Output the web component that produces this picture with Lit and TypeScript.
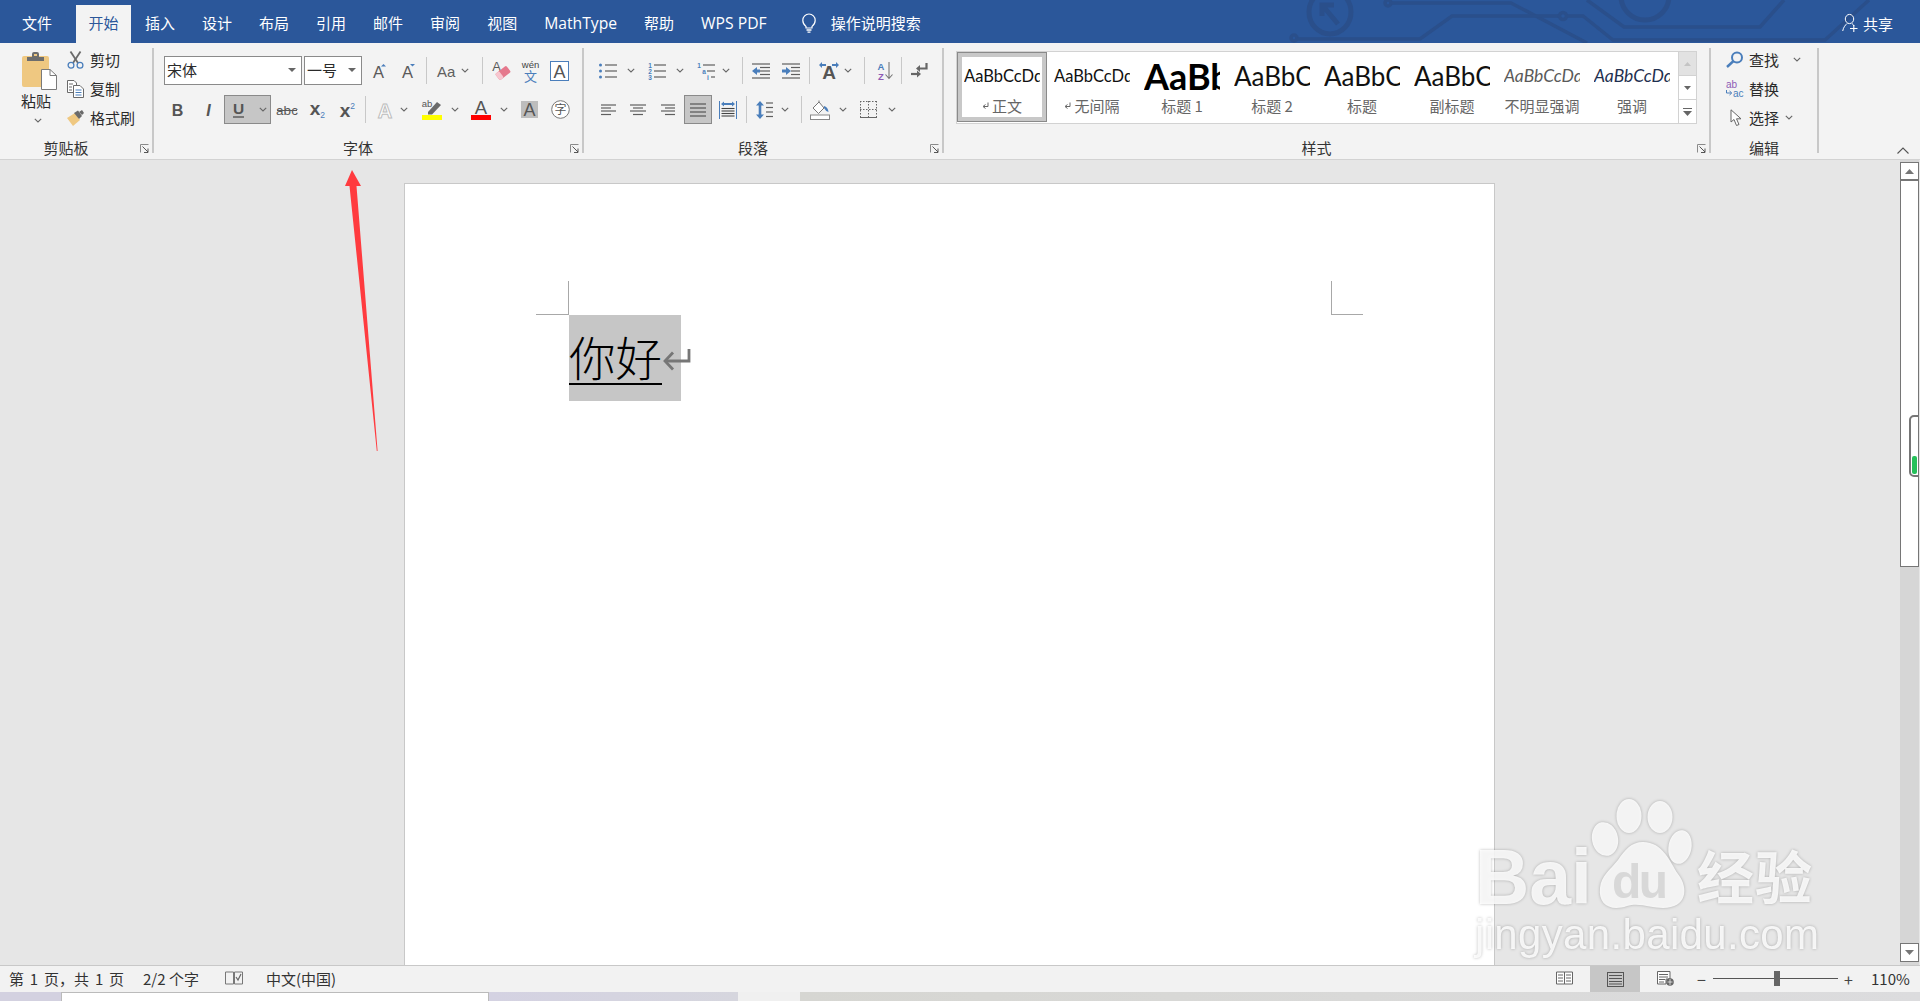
import { LitElement, html, css, svg, TemplateResult } from "lit";
import { customElement } from "lit/decorators.js";

type Item = [number, number, unknown];
const G = "#5f5f5f";
const B = "#4a7ebb";

const ic = (w: number, h: number, body: unknown) =>
  html`<svg class="ic" width=${w} height=${h} viewBox="0 0 ${w} ${h}">${body}</svg>`;

const chev = ic(8, 5, svg`<polyline points="0.8,0.8 4,4 7.2,0.8" fill="none" stroke="#666" stroke-width="1.1"/>`);
const caret = ic(8, 4, svg`<polygon points="0,0 8,0 4,4" fill="#666"/>`);
const sep = html`<div class="vsep"></div>`;
const lines = (rows: [number, number, number][], color = G, sw = 1.2) =>
  rows.map(([x1, x2, y]) => svg`<line x1=${x1} x2=${x2} y1=${y} y2=${y} stroke=${color} stroke-width=${sw}/>`);

const row = (x0: number, items: Item[], cls = "row") => {
  let end = x0;
  return html`<div class=${cls}>
    ${items.map(([x, w, c]) => {
      const m = x - end;
      end = x + w;
      return html`<div class="cell" style="margin-left:${m}px;width:${w}px">${c}</div>`;
    })}
  </div>`;
};

const launcher = ic(9, 9, svg`<path d="M0.5 8.5V0.5H8.5" fill="none" stroke="#8a8a8a"/><path d="M2.5 2.5L8 8M8 4.5V8.5H4" fill="none" stroke="#555"/>`);

const pasteIc = ic(36, 38, svg`
  <rect x="1" y="4" width="27" height="31" rx="2" fill="#efc881"/>
  <path d="M6 9V5H11V2Q11 0 13 0H16Q18 0 18 2V5H23V9Z" fill="#6d6d6d"/>
  <rect x="13" y="2" width="3" height="2" fill="#efc881"/>
  <path d="M20.5 17.5H29L35.5 23.5V37.5H20.5Z" fill="#fff" stroke="#7a7a7a"/>
  <path d="M29 17.5V23.5H35.5" fill="none" stroke="#7a7a7a"/>`);
const scissorsIc = ic(17, 18, svg`
  <line x1="3.5" y1="0.5" x2="11" y2="12" stroke="#6a6a6a" stroke-width="1.8"/>
  <line x1="13.5" y1="0.5" x2="6" y2="12" stroke="#6a6a6a" stroke-width="1.8"/>
  <circle cx="4" cy="14.2" r="2.9" fill="none" stroke=${B} stroke-width="1.3"/>
  <circle cx="13" cy="14.2" r="2.9" fill="none" stroke=${B} stroke-width="1.3"/>`);
const copyIc = ic(17, 18, svg`
  <path d="M0.5 0.5H7L9.5 3V12.5H0.5Z" fill="#fff" stroke="#6a6a6a"/>
  <path d="M6.5 5.5H13L16.5 9V17.5H6.5Z" fill="#fff" stroke="#6a6a6a"/>
  ${lines([[2, 6, 4], [2, 5, 7], [2, 5, 10]], "#6a6a6a", 1)}
  ${lines([[8.5, 14.5, 10], [8.5, 14.5, 12.5], [8.5, 14.5, 15]], B, 1)}`);
const painterIc = ic(18, 16, svg`
  <polygon points="0,8 8,3 13,10 6,16" fill="#efc881"/>
  <polygon points="7,3 11,0.5 15,6 12,9" fill="#6a6a6a"/>
  <polygon points="12,2 15,0 17,3 15,5" fill="#6a6a6a"/>`);

const glyph = (x: number, y: number, t: string, size: number, color = G, weight = "400", style = "normal") =>
  svg`<text x=${x} y=${y} font-size=${size} fill=${color} font-weight=${weight} font-style=${style} class="lat" text-anchor="middle">${t}</text>`;

const growIc = ic(13, 14, svg`${glyph(5.5, 14, "A", 16.5, "#5a5a5a")}<polygon points="8,2.5 13,2.5 10.5,0" fill=${B}/>`);
const shrinkIc = ic(13, 14, svg`${glyph(5.5, 14, "A", 16.5, "#5a5a5a")}<polygon points="8,0 13,0 10.5,2.5" fill=${B}/>`);
const aaIc = ic(18, 14, svg`<text x="0" y="13" font-size="15" fill=${G} class="lat">Aa</text>`);
const eraserIc = ic(19, 21, svg`
  ${glyph(4.5, 11, "A", 13, "#5a5a5a")}
  <g transform="rotate(-38 11 13)"><rect x="4" y="9" width="14" height="8" rx="1.5" fill="#e5788c"/><rect x="4" y="9" width="5" height="8" rx="1.5" fill="#f7c6cf"/></g>`);
const wenIc = ic(17, 22, svg`
  ${glyph(8.5, 8, "wén", 9.5, "#444")}
  <text x="8.5" y="21" font-size="13" fill=${B} class="cjk" text-anchor="middle">文</text>`);
const boxAIc = ic(19, 20, svg`<rect x="0.5" y="0.5" width="18" height="19" fill="#fff" stroke=${B}/>${glyph(9.5, 16.5, "A", 18, "#555")}`);

const boldIc = ic(11, 15, svg`${glyph(5.5, 13.5, "B", 16, "#555", "700")}`);
const italIc = ic(11, 15, svg`${glyph(5.5, 13.5, "I", 16, "#555", "700", "italic")}`);
const underBtn = html`<div class="toggled ubtn">${ic(11, 17, svg`${glyph(5.5, 12.5, "U", 15.5, "#555", "700")}<line x1="0" x2="11" y1="16" y2="16" stroke="#555" stroke-width="1.4"/>`)}${chev}</div>`;
const abcIc = ic(20, 12, svg`${glyph(10, 10.5, "abc", 13.5, "#5a5a5a")}<line x1="0" x2="20" y1="6.5" y2="6.5" stroke="#5a5a5a" stroke-width="1"/>`);
const subIc = ic(15, 16, svg`${glyph(5, 12.5, "x", 19, "#555", "700")}${glyph(12.5, 15.5, "2", 8.5, B)}`);
const supIc = ic(15, 16, svg`${glyph(5, 15, "x", 19, "#555", "700")}${glyph(12.5, 6.5, "2", 8.5, B)}`);
const effectIc = ic(16, 18, svg`<text x="8" y="16.5" font-size="20" text-anchor="middle" class="lat" font-weight="700" fill="#fff" stroke="#bdbdbd" stroke-width="1">A</text>`);
const highlightIc = ic(20, 21, svg`
  ${glyph(5, 7.5, "ab", 9.5, "#555")}
  <polygon points="6,13 15,3 19,6 10,15.5 6,15.5" fill="#6a6a6a"/>
  <rect x="0" y="16" width="20" height="5" fill="#ffff00"/>`);
const redAIc = ic(20, 21, svg`${glyph(10, 15, "A", 18.5, "#555")}<rect x="0" y="16" width="20" height="5" fill="#ff0000"/>`);
const shadeAIc = ic(17, 17, svg`<rect width="17" height="17" fill="#bdbdbd"/>${glyph(8.5, 15, "A", 18, "#555")}`);
const circleIc = ic(19, 19, svg`<circle cx="9.5" cy="9.5" r="8.8" fill="#fff" stroke="#777"/><text x="9.5" y="14" font-size="12" fill="#555" class="cjk" text-anchor="middle">字</text>`);

const dots = (x: number, ys: number[], color = B) => ys.map((y) => svg`<circle cx=${x} cy=${y} r="1.5" fill=${color}/>`);
const bulletsIc = ic(18, 16, svg`${dots(1.5, [2, 8, 14])}${lines([[6, 18, 2], [6, 18, 8], [6, 18, 14]])}`);
const small = (x: number, y: number, t: string, c = B) => glyph(x, y, t, 6.5, c, "700");
const numsIc = ic(18, 16, svg`${small(2, 5, "1")}${small(2, 11, "2")}${small(2, 16.5, "3")}${lines([[6, 18, 2], [6, 18, 8], [6, 18, 14]])}`);
const multiIc = ic(18, 16, svg`${small(2, 5, "1")}${small(7, 11, "a", "#4a7ebb")}${small(11, 16.5, "i")}${lines([[6, 18, 2], [10, 18, 8], [14, 18, 14]])}`);
const indentDec = ic(18, 16, svg`${lines([[0, 18, 1], [8, 18, 4.5], [8, 18, 8], [8, 18, 11.5], [0, 18, 15]])}<path d="M0 8L5 4V6.5H8V9.5H5V12Z" fill=${B}/>`);
const indentInc = ic(18, 16, svg`${lines([[0, 18, 1], [9, 18, 4.5], [9, 18, 8], [9, 18, 11.5], [0, 18, 15]])}<path d="M9 8L4 4V6.5H0V9.5H4V12Z" fill=${B}/>`);
const dirIc = ic(20, 17, svg`${glyph(10, 17, "A", 19, "#555", "700")}<path d="M0 3L3 0V2H7V4H3V6ZM20 3L17 0V2H13V4H17V6Z" fill=${B}/>`);
const sortIc = ic(17, 18, svg`
  ${glyph(5, 8, "A", 9.5, B, "700")}${glyph(5, 17.5, "Z", 9.5, "#8e5bb5", "700")}
  <path d="M13 0V16M9.5 12.5L13 16.5L16.5 12.5" fill="none" stroke="#777" stroke-width="1.1"/>`);
const enterIc = ic(17, 15, svg`
  <path d="M15.5 0V5.5H7" fill="none" stroke="#666" stroke-width="2.2"/><path d="M9 2L5 5.5L9 9Z" fill="#666"/>
  <path d="M0 11H7" fill="none" stroke="#666" stroke-width="2.2"/><path d="M6 7.5L10 11L6 14.5Z" fill="#666"/>`);
const alignL = ic(15, 12, svg`${lines([[0, 15, 1], [0, 10, 4], [0, 15, 7], [0, 10, 10.5]])}`);
const alignC = ic(16, 12, svg`${lines([[0, 16, 1], [3, 13, 4], [0, 16, 7], [3, 13, 10.5]])}`);
const alignR = ic(14, 12, svg`${lines([[0, 14, 1], [4, 14, 4], [0, 14, 7], [4, 14, 10.5]])}`);
const justBtn = html`<div class="toggled jbtn">${ic(16, 14, svg`${lines([[0, 16, 1], [0, 16, 5], [0, 16, 9], [0, 16, 13]], "#555")}`)}</div>`;
const distIc = ic(18, 18, svg`
  <line x1="0.5" x2="0.5" y1="0" y2="18" stroke=${B}/><line x1="17.5" x2="17.5" y1="0" y2="18" stroke=${B}/>
  <path d="M2 3L5 0.5V2H13V0.5L16 3L13 5.5V4H5V5.5Z" fill=${B}/>
  ${lines([[2.5, 15.5, 7.5], [2.5, 15.5, 10], [2.5, 15.5, 12.5], [2.5, 15.5, 15]], "#444", 1.1)}`);
const spacingIc = ic(17, 18, svg`
  <path d="M4 0L8 4.5H5.3V13.5H8L4 18L0 13.5H2.7V4.5H0Z" fill=${B}/>
  ${lines([[10, 17, 2], [10, 17, 6.5], [10, 17, 11], [10, 17, 15.5]])}`);
const fillIc = ic(20, 20, svg`
  <path d="M3 8L9 2L14 8L8.5 13.5Z" fill="#fff" stroke="#777"/>
  <path d="M9 2V0.5" stroke="#777"/>
  <path d="M14 6Q18 7 18.5 12Q15.5 11 14 8Z" fill=${B}/>
  <rect x="0.5" y="15" width="19" height="4.5" fill="#fff" stroke="#888"/>`);
const borderIc = ic(17, 17, svg`
  <g stroke="#666" stroke-dasharray="1.5 1.5" fill="none"><path d="M0.5 0V16M8.5 0V16M16.5 0V16M0 0.5H17M0 8.5H17"/></g>
  <line x1="0" x2="17" y1="16.5" y2="16.5" stroke="#666"/>`);
const findIc = ic(18, 17, svg`<circle cx="11" cy="6.5" r="5" fill="none" stroke=${B} stroke-width="2"/><line x1="7.5" y1="10" x2="1" y2="16" stroke=${B} stroke-width="2.4"/>`);
const replaceIc = ic(20, 17, svg`
  <text x="1" y="8" font-size="10" fill="#8e5bb5" class="lat">ab</text>
  <text x="8" y="16.5" font-size="10" fill=${B} class="lat">ac</text>
  <path d="M1.5 10V13H6M4.5 11L6.8 13L4.5 15" fill="none" stroke=${B}/>`);
const selectIc = ic(12, 17, svg`<path d="M1 0.8V13L4 10.5L6.5 16.5L9 15.5L6.5 9.8H11Z" fill="#fff" stroke="#666"/>`);

const cjkText = (t: string) => html`<span class="txt">${t}</span>`;

const fontRow1 = row(154, [
  [164, 138, html`<div class="combo"><span>宋体</span>${caret}</div>`],
  [304, 58, html`<div class="combo"><span>一号</span>${caret}</div>`],
  [373, 13, growIc], [402, 13, shrinkIc], [426, 1, sep],
  [437, 18, aaIc], [461, 8, chev], [482, 1, sep],
  [492, 19, eraserIc], [522, 17, wenIc], [550, 19, boxAIc],
]);
const fontRow2 = row(154, [
  [172, 11, boldIc], [203, 11, italIc], [224, 47, underBtn], [277, 20, abcIc],
  [310, 15, subIc], [340, 15, supIc], [365, 1, sep],
  [377, 16, effectIc], [400, 8, chev], [422, 20, highlightIc], [451, 8, chev],
  [471, 20, redAIc], [500, 8, chev], [521, 17, shadeAIc], [551, 19, circleIc],
]);
const paraRow1 = row(584, [
  [599, 18, bulletsIc], [627, 8, chev], [648, 18, numsIc], [676, 8, chev],
  [697, 18, multiIc], [722, 8, chev], [742, 1, sep],
  [752, 18, indentDec], [782, 18, indentInc], [809, 1, sep],
  [819, 20, dirIc], [844, 8, chev], [864, 1, sep], [876, 17, sortIc], [901, 1, sep], [911, 17, enterIc],
]);
const paraRow2 = row(584, [
  [601, 15, alignL], [630, 16, alignC], [661, 14, alignR], [684, 28, justBtn], [719, 18, distIc],
  [746, 1, sep], [756, 17, spacingIc], [781, 8, chev], [801, 1, sep],
  [810, 20, fillIc], [839, 8, chev], [860, 17, borderIc], [888, 8, chev],
]);

const styleItems = [
  { s: "AaBbCcDd", l: "正文", c: "normal", mark: true, sel: true },
  { s: "AaBbCcDd", l: "无间隔", c: "normal", mark: true },
  { s: "AaBb", l: "标题 1", c: "h1" },
  { s: "AaBbC", l: "标题 2", c: "h2" },
  { s: "AaBbC", l: "标题", c: "h2" },
  { s: "AaBbC", l: "副标题", c: "h2" },
  { s: "AaBbCcDd", l: "不明显强调", c: "em1" },
  { s: "AaBbCcDd", l: "强调", c: "em2" },
];
const markIc = ic(7, 8, svg`<path d="M6 0.5V4.5H1.5M3.5 2.5L1 4.5L3.5 6.5" fill="none" stroke="#666"/>`);

const readIc = ic(17, 15, svg`
  <path d="M0.5 1H8.5V13H0.5ZM8.5 1H16.5V13H8.5Z" fill="#fff" stroke="#666"/>
  ${lines([[2, 7, 4], [2, 7, 7], [2, 7, 10], [10, 15, 4], [10, 15, 7], [10, 15, 10]], "#666", 1)}`);
const printIc = ic(17, 15, svg`
  <rect x="0.5" y="0.5" width="16" height="14" fill="none" stroke="#555"/>
  ${lines([[2, 15, 3.5], [2, 15, 6.5], [2, 15, 9.5], [2, 15, 12]], "#555", 1)}`);
const webIc = ic(17, 15, svg`
  <path d="M0.5 0.5H13V8H9V13H0.5Z" fill="#fff" stroke="#666"/>
  ${lines([[2, 11, 3.5], [2, 11, 6], [2, 8, 8.5], [2, 7, 11]], "#666", 1)}
  <circle cx="13" cy="11" r="3.8" fill="#666"/><path d="M10.5 11H15.5M13 8V14" stroke="#fff" stroke-width=".7"/>`);
const proofIc = ic(18, 15, svg`
  <path d="M0.5 1H8.5V13H0.5ZM9.5 1H17.5V13H9.5Z" fill="none" stroke="#777"/>
  <path d="M11 6L13 9L16 3" fill="none" stroke="#666" stroke-width="1.2"/>`);
const slider = html`<div class="slider"><div class="knob"></div></div>`;

@customElement("app-root")
export class AppRoot extends LitElement {
  static styles = css`
    :host { display: block; width: 1920px; height: 1001px; overflow: hidden; font-family: "Noto Sans CJK SC", "Liberation Sans", sans-serif; font-size: 15px; color: #2a2a2a; }
    .app { position: relative; width: 1920px; height: 1001px; display: flex; flex-direction: column; overflow: hidden; background: #e6e6e6; }
    .lat { font-family: "Liberation Sans", sans-serif; }
    .cjk { font-family: "Noto Sans CJK SC", sans-serif; }
    .ic { display: block; flex: none; overflow: visible; }

    .titlebar { position: relative; height: 43px; flex: none; background: #2b579a; display: flex; align-items: flex-end; color: #fff; overflow: hidden; }
    .circuit { position: absolute; left: 0; top: 0; }
    .tabs { position: relative; display: flex; height: 38px; padding-left: 22px; width: 100%; box-sizing: border-box; }
    .tab { height: 38px; line-height: 36px; padding: 0 13px; white-space: nowrap; margin-right: 1px; font-family: "Noto Sans CJK SC", sans-serif; }
    .tab.file { padding: 0; margin-right: 24px; }
    .tab.active { background: #f3f3f3; color: #2b579a; padding: 0 12.5px; margin-right: 1px; }
    .tab.latin { font-family: "Open Sans", "Noto Sans", sans-serif; font-size: 15.7px; }
    .search { display: flex; align-items: center; height: 35px; gap: 15px; margin-left: 21px; }
    .share { display: flex; align-items: center; height: 36px; gap: 5px; margin-left: auto; margin-right: 27px; }

    .ribbon { height: 117px; flex: none; background: #f3f3f3; border-bottom: 1px solid #d2d2d2; box-sizing: border-box; padding-top: 5px; display: flex; }
    .group { height: 105px; border-right: 2px solid #c8c8c8; box-sizing: border-box; display: flex; flex-direction: column; flex: none; }
    .g1 { width: 154px; } .g2 { width: 430px; } .g3 { width: 360px; } .g4 { width: 767px; } .g5 { width: 108px; }
    .body { height: 92px; flex: none; }
    .body.tall { height: 95px; }
    .rows { box-sizing: border-box; padding-top: 8px; display: flex; flex-direction: column; gap: 10px; }
    .row { display: flex; align-items: center; height: 29px; flex: none; }
    .cell { flex: none; display: flex; align-items: center; justify-content: center; white-space: nowrap; }
    .foot { display: flex; height: 16px; flex: none; align-items: center; padding-right: 3px; }
    .foot .name { flex: 1; text-align: center; line-height: 20px; padding-right: 8px; color: #333; }
    .foot.plain .name { padding: 0 0 0 3px; }
    .vsep { width: 1px; height: 27px; background: #c8c8c8; }
    .combo { width: 100%; height: 29px; box-sizing: border-box; border: 1px solid #8a8a8a; background: #fff; display: flex; align-items: center; justify-content: space-between; padding: 0 5px 2px 2px; }
    .toggled { height: 29px; box-sizing: border-box; background: #c6c6c6; border: 1px solid #8a8a8a; display: flex; align-items: center; width: 100%; }
    .ubtn { padding-left: 8px; gap: 15px; }
    .jbtn { justify-content: center; }
    .txt { display: block; line-height: 20px; color: #2a2a2a; }

    .clip { display: flex; }
    .paste { margin-left: 21px; width: 36px; padding-top: 4px; display: flex; flex-direction: column; align-items: flex-start; }
    .paste .txt { margin-top: 1px; }
    .paste .down { margin: 7px 0 0 13px; }
    .cliprows { margin-top: -3px; }

    .gallery { margin: 3px 0 0 12px; width: 741px; height: 73px; box-sizing: border-box; border: 1px solid #d2d2d2; background: #fff; display: flex; position: relative; }
    .sitem { width: 90px; flex: none; height: 70px; margin-top: 0; display: flex; flex-direction: column; align-items: center; box-sizing: border-box; }
    .sitem.sel { box-shadow: inset 0 0 0 1px #8a8a8a, inset 0 0 0 5px #c8c8c8; }
    .sample { width: 76px; height: 45px; overflow: hidden; white-space: nowrap; line-height: 48px; color: #111; font-family: Lato, "Liberation Sans", sans-serif; font-size: 16.5px; flex: none; }
    .sample.h1 { font-size: 36px; font-weight: 700; color: #000; }
    .sample.h2 { font-size: 26px; }
    .sample.em1 { font-style: italic; color: #5a5a5a; font-size: 17.5px; }
    .sample.em2 { font-style: italic; color: #1f3050; font-size: 17.5px; }
    .slabel { color: #666; display: flex; align-items: center; gap: 3px; line-height: 18px; }
    .scroller { margin-left: auto; width: 18px; flex: none; display: flex; flex-direction: column; border-left: 1px solid #d2d2d2; box-sizing: border-box; }
    .sbtn { flex: 1; display: flex; align-items: center; justify-content: center; border-bottom: 1px solid #d2d2d2; }
    .sbtn.dis { background: #e2e2e2; }
    .sbtn:last-child { border-bottom: none; }

    .work { flex: 1; min-height: 0; display: flex; background: #e6e6e6; }
    .canvas { flex: 1; min-width: 0; padding: 23px 0 0 404px; box-sizing: border-box; }
    .page { position: relative; width: 1091px; height: 100%; box-sizing: border-box; background: #fff; border: 1px solid #c8c8c8; border-bottom: none; padding: 131px 0 0 164px; }
    .selblock { width: 112px; height: 86px; background: #c6c6c6; display: flex; align-items: center; }
    .word { font-size: 46.5px; line-height: 60px; color: #000; border-bottom: 2px solid #000; height: 57px; font-family: "Noto Sans CJK SC", sans-serif; font-weight: 300; margin-top: -5px; white-space: nowrap; }
    .ret { margin: 2px 0 0 1px; }
    .crop { position: absolute; }
    .crop.tlv { left: 163px; top: 97px; width: 1px; height: 33px; background: #a8a8a8; }
    .crop.tlh { left: 131px; top: 130px; width: 33px; height: 1px; background: #a8a8a8; }
    .crop.trv { left: 926px; top: 97px; width: 1px; height: 33px; background: #a8a8a8; }
    .crop.trh { left: 926px; top: 130px; width: 32px; height: 1px; background: #a8a8a8; }

    .vscroll { width: 19px; margin-right: 1px; flex: none; padding-top: 2px; box-sizing: border-box; display: flex; flex-direction: column; position: relative; background: #d6d6d6; padding-bottom: 3px; }
    .vbtn { height: 19px; flex: none; box-sizing: border-box; border: 1px solid #767676; background: #fff; display: flex; align-items: center; justify-content: center; }
    .vbtn.up { border-bottom: 2px solid #767676; }
    .thumb { height: 386px; flex: none; box-sizing: border-box; background: #fff; border: 1px solid #767676; border-top: none; }
    .gap { flex: 1; }
    .pill { position: absolute; left: 9px; top: 255px; width: 10px; height: 62px; box-sizing: border-box; border: 2px solid #767676; border-right-width: 1px; border-radius: 5px 0 0 5px; background: #fff; display: flex; flex-direction: column; justify-content: flex-end; padding: 0 1px 1px 1px; }
    .pill i { display: block; height: 18px; background: #25c05a; border-radius: 2px; }

    .status { height: 27px; flex: none; box-sizing: border-box; background: #f2f2f2; border-top: 1px solid #c8c8c8; }
    .status .row { height: 25px; }
    .status .cell { font-size: 15px; color: #333; justify-content: flex-start; }
    .pagecount { word-spacing: 2.5px; }
    .printbox { width: 100%; height: 27px; margin-top: 1px; background: #c6c6c6; display: flex; align-items: center; justify-content: center; }
    .slider { position: relative; width: 100%; height: 1px; background: #555; }
    .knob { position: absolute; left: 61px; top: -7px; width: 6px; height: 15px; background: #666; }
    .zoomsign { font-size: 16px; line-height: 20px; color: #444; }

    .strip { height: 9px; flex: none; display: flex; }
    .strip div { height: 100%; }
    .s1 { width: 61px; background: #d3d1e0; }
    .s2 { width: 428px; background: #fff; border-left: 1px solid #bbb; border-top: 1px solid #bbb; box-sizing: border-box; border-right: 1px solid #bbb; }
    .s3 { width: 249px; background: linear-gradient(90deg, #d4d2e2, #d6d6de); }
    .s4 { width: 62px; background: #f0f0f0; }
    .s5 { flex: 1; background: linear-gradient(90deg, #d6d6d2, #dcdcde); }

    .arrow { position: absolute; left: 340px; top: 165px; }
    .mark { position: absolute; left: 1465px; top: 796px; filter: drop-shadow(0 0 1.5px rgba(0,0,0,.3)); }
  `;

  render(): TemplateResult {
    return html`<div class="app">
      <header class="titlebar">
        <svg class="circuit" width="1920" height="43" fill="none" stroke="#2a4f8b" stroke-width="3.5">
          <ellipse cx="1330" cy="12" rx="21" ry="22" stroke-width="5"/>
          <path d="M1323 6L1338 24M1322 16V5H1334" stroke-width="5"/>
          <circle cx="1388" cy="3" r="3"/><path d="M1391 3H1511L1587 43"/>
          <circle cx="1294" cy="38" r="3"/><path d="M1297 39H1420L1452 16H1560"/>
          <circle cx="1563" cy="16" r="3.5"/><path d="M1567 16H1583L1613 40H1825L1869 0"/>
          <path d="M1587 0L1624 27H1760L1784 0"/>
          <circle cx="1645" cy="-4" r="24" stroke-width="5"/>
        </svg>
        <div class="tabs">
          <div class="tab file">文件</div>
          <div class="tab active">开始</div>
          ${["插入", "设计", "布局", "引用", "邮件", "审阅", "视图"].map((t) => html`<div class="tab">${t}</div>`)}
          <div class="tab latin">MathType</div>
          <div class="tab">帮助</div>
          <div class="tab latin">WPS PDF</div>
          <div class="search">
            ${ic(14, 20, svg`<path d="M4 13.5C1.5 11.5 0.8 9.5 0.8 7.2A6.2 6.2 0 0 1 13.2 7.2C13.2 9.5 12.5 11.5 10 13.5V15H4Z" fill="none" stroke="#fff" stroke-width="1.2"/><path d="M4.5 17H9.5M5.5 19.2H8.5" stroke="#fff" stroke-width="1.3"/>`)}
            <span>操作说明搜索</span>
          </div>
          <div class="share">
            ${ic(16, 18, svg`<ellipse cx="7.5" cy="5" rx="4.2" ry="4.6" fill="none" stroke="#fff"/><path d="M0.7 17C1.5 13 3.5 11 5 9.5M10 9.5C11 10.3 11.6 11 12 12" fill="none" stroke="#fff"/><path d="M8 14.5H15.5M11.8 11V18" stroke="#fff" stroke-width="1.1"/>`)}
            <span>共享</span>
          </div>
        </div>
      </header>

      <section class="ribbon">
        <div class="group g1">
          <div class="body clip">
            <div class="paste">${pasteIc}${cjkText("粘贴")}<div class="down">${chev}</div></div>
            <div class="cliprows">
              ${row(57, [[67, 17, scissorsIc], [90, 30, cjkText("剪切")]])}
              ${row(57, [[67, 17, copyIc], [90, 30, cjkText("复制")]])}
              ${row(57, [[67, 18, painterIc], [90, 45, cjkText("格式刷")]])}
            </div>
          </div>
          <div class="foot"><span class="name">剪贴板</span>${launcher}</div>
        </div>
        <div class="group g2">
          <div class="body rows">${fontRow1}${fontRow2}</div>
          <div class="foot"><span class="name">字体</span>${launcher}</div>
        </div>
        <div class="group g3">
          <div class="body rows">${paraRow1}${paraRow2}</div>
          <div class="foot"><span class="name">段落</span>${launcher}</div>
        </div>
        <div class="group g4">
          <div class="body">
            <div class="gallery">
              ${styleItems.map((s) => html`<div class="sitem ${s.sel ? "sel" : ""}">
                <div class="sample ${s.c}">${s.s}</div>
                <div class="slabel">${s.mark ? markIc : ""}${s.l}</div>
              </div>`)}
              <div class="scroller">
                <div class="sbtn dis">${ic(7, 4, svg`<polygon points="0,4 7,4 3.5,0" fill="#c4c4c4"/>`)}</div>
                <div class="sbtn">${ic(7, 4, svg`<polygon points="0,0 7,0 3.5,4" fill="#666"/>`)}</div>
                <div class="sbtn">${ic(9, 8, svg`<line x1="0" x2="9" y1="0.5" y2="0.5" stroke="#666"/><polygon points="0,3 9,3 4.5,8" fill="#666"/>`)}</div>
              </div>
            </div>
          </div>
          <div class="foot"><span class="name">样式</span>${launcher}</div>
        </div>
        <div class="group g5">
          <div class="body tall cliprows">
            ${row(1711, [[1726, 18, findIc], [1749, 30, cjkText("查找")], [1793, 8, chev]])}
            ${row(1711, [[1725, 20, replaceIc], [1749, 30, cjkText("替换")]])}
            ${row(1711, [[1730, 12, selectIc], [1749, 30, cjkText("选择")], [1785, 8, chev]])}
          </div>
          <div class="foot plain"><span class="name">编辑</span></div>
        </div>
        ${ic(12, 7, svg`<polyline points="0.5,6.5 6,1 11.5,6.5" fill="none" stroke="#555" stroke-width="1.1" transform="translate(78 99)"/>`)}
      </section>

      <main class="work">
        <div class="canvas">
          <div class="page">
            <i class="crop tlv"></i><i class="crop tlh"></i><i class="crop trv"></i><i class="crop trh"></i>
            <div class="selblock">
              <span class="word">你好</span>
              <div class="ret">${ic(27, 23, svg`<path d="M26 1V13H3" fill="none" stroke="#767676" stroke-width="2.8"/><path d="M10 4.5L2 13L10 21.5" fill="none" stroke="#767676" stroke-width="2.8"/>`)}</div>
            </div>
          </div>
        </div>
        <aside class="vscroll">
          <div class="vbtn up">${ic(9, 5, svg`<polygon points="0,5 9,5 4.5,0" fill="#767676"/>`)}</div>
          <div class="thumb"></div>
          <div class="gap"></div>
          <div class="vbtn">${ic(9, 5, svg`<polygon points="0,0 9,0 4.5,5" fill="#767676"/>`)}</div>
          <div class="pill"><i></i></div>
        </aside>
      </main>

      <footer class="status">
        ${row(0, [
          [9, 112, html`<span class="pagecount">第 1 页，共 1 页</span>`],
          [143, 62, "2/2 个字"],
          [225, 18, proofIc],
          [266, 72, "中文(中国)"],
          [1556, 17, readIc],
          [1590, 50, html`<div class="printbox">${printIc}</div>`],
          [1657, 17, webIc],
          [1697, 10, html`<span class="zoomsign">−</span>`],
          [1713, 125, slider],
          [1844, 10, html`<span class="zoomsign">+</span>`],
          [1871, 40, "110%"],
        ])}
      </footer>
      <div class="strip"><div class="s1"></div><div class="s2"></div><div class="s3"></div><div class="s4"></div><div class="s5"></div></div>

      <svg class="arrow" width="45" height="290" viewBox="0 0 45 290">
        <polygon points="12,5 21,21 16.5,21 37.6,286 36.8,286 9.5,21 5,21" fill="#ff3b3f"/>
      </svg>

      <svg class="mark" width="360" height="175" viewBox="0 0 360 175">
        <g fill="#fff" fill-opacity=".85">
          <ellipse cx="140" cy="43" rx="13" ry="17" transform="rotate(-12 140 43)"/>
          <ellipse cx="164" cy="20" rx="12.5" ry="17"/>
          <ellipse cx="195" cy="21" rx="12.5" ry="16"/>
          <ellipse cx="215" cy="51" rx="11.5" ry="17" transform="rotate(10 215 51)"/>
          <path d="M178 46C198 46 205 66 213 78C224 92 222 112 198 112C186 112 174 106 162 110C145 116 133 108 135 92C136 80 145 74 153 64C160 54 166 46 178 46Z"/>
          <text x="10" y="108" font-size="78" font-weight="700" class="lat" textLength="117" lengthAdjust="spacingAndGlyphs">Bai</text>
          <text x="232" y="103" font-size="57" font-weight="700" class="cjk" textLength="115">经验</text>
          <text x="10" y="153" font-size="42" class="lat" textLength="344">jingyan.baidu.com</text>
        </g>
        <text x="147" y="102" font-size="48" font-weight="700" class="lat" fill="#d8d8d8" textLength="56">du</text>
      </svg>
    </div>`;
  }
}
